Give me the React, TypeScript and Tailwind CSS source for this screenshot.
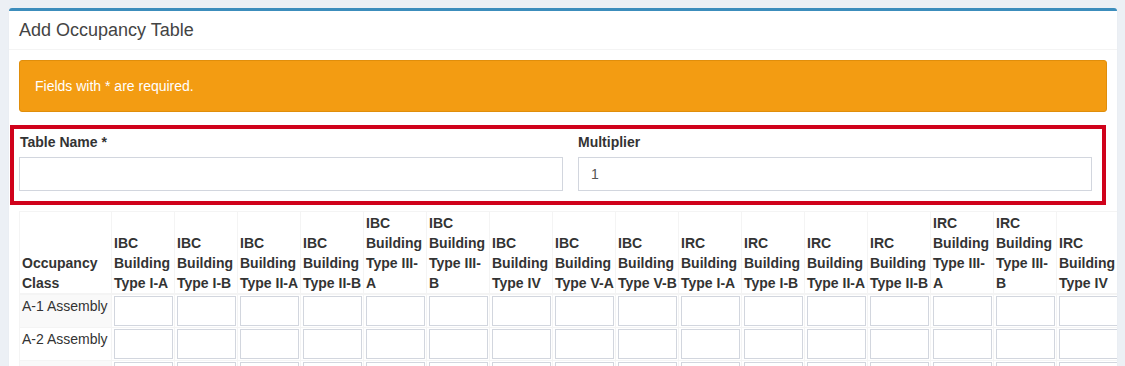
import React from "react";

const IBC_TYPES: string[][] = [
  ["Type I-A"],
  ["Type I-B"],
  ["Type II-A"],
  ["Type II-B"],
  ["Type III-", "A"],
  ["Type III-", "B"],
  ["Type IV"],
  ["Type V-A"],
  ["Type V-B"],
];

const COLUMNS = [
  ...IBC_TYPES.map((t) => ["IBC", "Building", ...t]),
  ...IBC_TYPES.map((t) => ["IRC", "Building", ...t]),
];

const ROWS = ["A-1 Assembly", "A-2 Assembly", "A-3 Assembly", "A-4 Assembly", "A-5 Assembly"];

export default function App() {
  return (
    <div className="min-h-screen bg-[#ecf0f5] pt-2 pl-[9px] pr-2 font-['Liberation_Sans',Arial,sans-serif] text-[14px] text-[#333]">
      <div className="bg-white border-t-[3px] border-[#3c8dbc] rounded-[3px] shadow-[0_1px_1px_rgba(0,0,0,0.1)] overflow-hidden min-h-[358px]">
        {/* Box header */}
        <div className="p-[10px] border-b border-[#f4f4f4]">
          <h3 className="text-[18px] leading-[18px] text-[#444]">Add Occupancy Table</h3>
        </div>

        {/* Box body */}
        <div className="p-[10px]">
          <div className="bg-[#f39c12] border border-[#e08e0b] rounded-[3px] p-[15px] text-white leading-[20px]">
            Fields with * are required.
          </div>

          <div className="mt-[13px] -ml-[9px] mr-[1px] border-4 border-[#d0021b] pt-[3px] pl-[5px] pr-[10px] pb-[10px] flex">
            <div className="w-[544px]">
              <label className="block ml-[1px] mb-[5px] font-bold leading-[20px] text-[#333]">Table Name *</label>
              <input className="block w-full h-[34px] border border-[#d2d6de] px-[12px] text-[#555] outline-none" />
            </div>
            <div className="ml-[15px] flex-1">
              <label className="block mb-[5px] font-bold leading-[20px] text-[#333]">Multiplier</label>
              <input
                defaultValue="1"
                className="block w-full h-[34px] border border-[#d2d6de] px-[12px] text-[#555] outline-none"
              />
            </div>
          </div>

          <table className="mt-[6px] border-collapse table-fixed w-[1226px]">
            <colgroup>
              <col className="w-[92px]" />
              {COLUMNS.map((_, i) => (
                <col key={i} className="w-[63px]" />
              ))}
            </colgroup>
            <thead>
              <tr>
                <th className="align-bottom text-left font-bold leading-[20px] text-[#333] pl-[2px] pr-[1px] pt-[1px] border border-[#f4f4f4] border-b-2 whitespace-nowrap">
                  Occupancy
                  <br />
                  Class
                </th>
                {COLUMNS.map((lines, i) => (
                  <th
                    key={i}
                    className="align-bottom text-left font-bold leading-[20px] text-[#333] pl-[2px] pr-[1px] pt-[1px] border border-[#f4f4f4] border-b-2 whitespace-nowrap"
                  >
                    {lines.map((l, j) => (
                      <div key={j}>{l}</div>
                    ))}
                  </th>
                ))}
              </tr>
            </thead>
            <tbody>
              {ROWS.map((name, r) => (
                <tr key={name}>
                  <td
                    className={`align-top leading-[20px] text-[#333] pl-[2px] pr-[1px] py-[1px] border border-[#f4f4f4] whitespace-nowrap ${
                      r % 2 === 0 ? "bg-[#f9f9f9]" : "bg-white"
                    }`}
                  >
                    {name}
                  </td>
                  {COLUMNS.map((_, i) => (
                    <td key={i} className="align-top pl-[2px] pr-[1px] py-[1px] border border-[#f4f4f4]">
                      <input className="block w-full h-[30px] border border-[#d2d6de] px-[4px] text-[#555] outline-none" />
                    </td>
                  ))}
                </tr>
              ))}
            </tbody>
          </table>
        </div>
      </div>
    </div>
  );
}
